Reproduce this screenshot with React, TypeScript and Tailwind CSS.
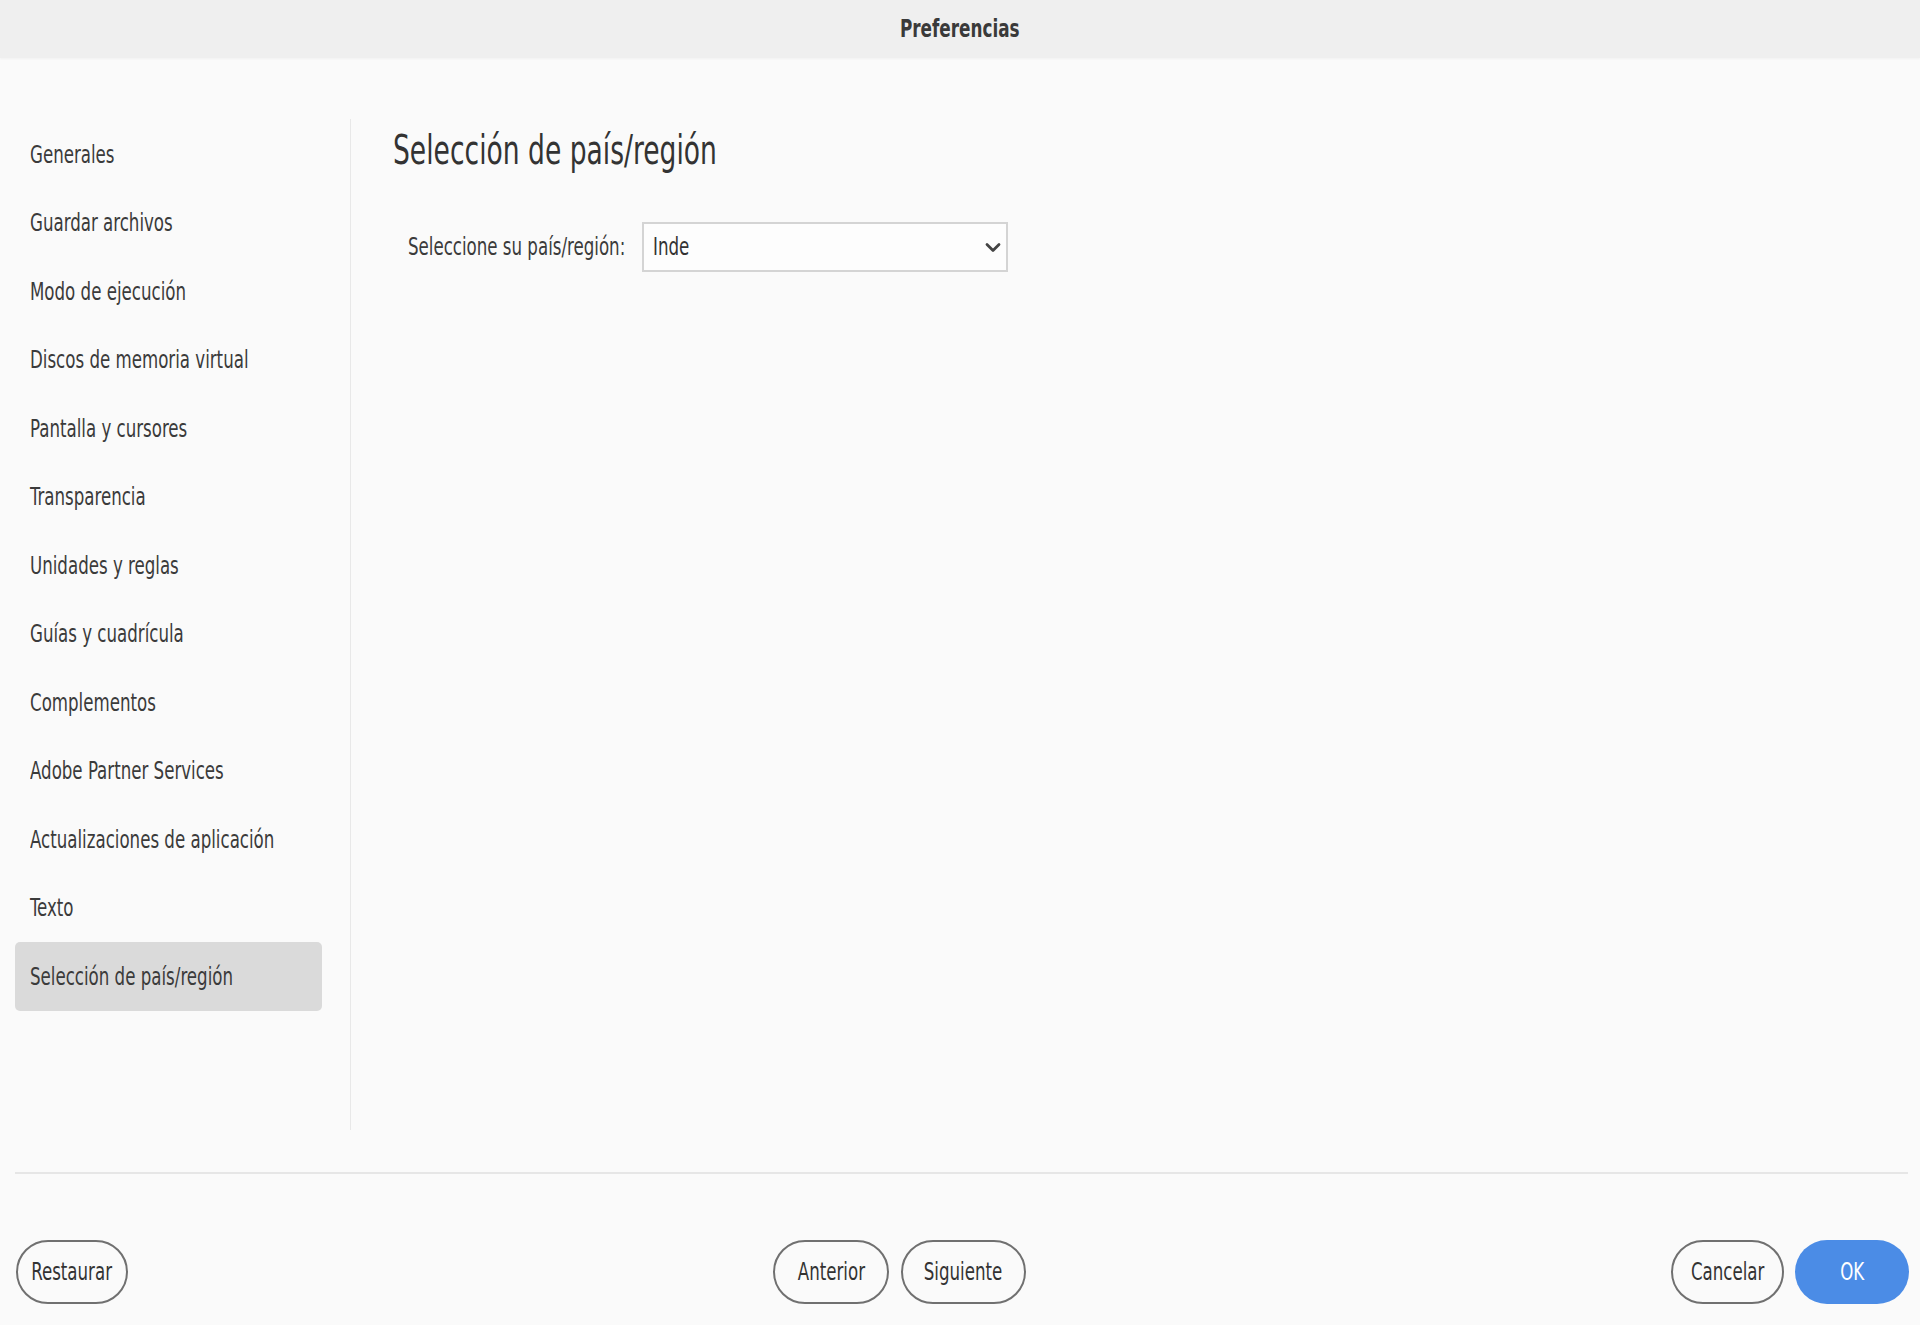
import { useState } from 'react';

const SECTIONS = [
  'Generales',
  'Guardar archivos',
  'Modo de ejecución',
  'Discos de memoria virtual',
  'Pantalla y cursores',
  'Transparencia',
  'Unidades y reglas',
  'Guías y cuadrícula',
  'Complementos',
  'Adobe Partner Services',
  'Actualizaciones de aplicación',
  'Texto',
  'Selección de país/región',
];

// the dialog font is very narrow; DejaVu Sans Condensed squeezed a bit more gets close
const font = "font-['DejaVu_Sans_Condensed','Liberation_Sans',sans-serif]";
const narrowLeft = 'inline-block whitespace-nowrap origin-left scale-x-[0.74]';
const narrowCenter = 'inline-block whitespace-nowrap origin-center scale-x-[0.74]';

function Chevron() {
  return (
    <svg width="16" height="11" viewBox="0 0 16 11" fill="none">
      <polyline points="2,2.5 8,8.5 14,2.5" stroke="#444" strokeWidth="2.8" strokeLinecap="round" strokeLinejoin="round" />
    </svg>
  );
}

export default function App() {
  const [active, setActive] = useState('Selección de país/región');

  const pill = 'h-[64px] rounded-full border-2 border-[#707070] text-[25px] text-[#333] flex items-center justify-center';

  return (
    <div className={`w-full h-[1325px] bg-[#fafafa] flex flex-col ${font}`}>
      <div className="h-[58px] shrink-0 bg-[#efefef] flex items-center justify-center shadow-[0_1px_2px_rgba(0,0,0,0.04)]">
        <span className="inline-block origin-center scale-x-[0.78] text-[24px] font-bold text-[#3a3a3a]">Preferencias</span>
      </div>

      <div className="flex h-[1011px] mt-[61px]">
        <nav className="w-[351px] shrink-0 pl-[15px] pr-[28px] pt-px border-r border-[#e8e8e8]">
          {SECTIONS.map((s) => (
            <button
              key={s}
              type="button"
              onClick={() => setActive(s)}
              className={`w-full h-[68.5px] flex items-center pl-[15px] rounded-[5px] text-left text-[25px] text-[#3b3b3b] overflow-hidden ${
                active === s ? 'bg-[#dadada]' : ''
              }`}
            >
              <span className={narrowLeft}>{s}</span>
            </button>
          ))}
        </nav>

        <main className="flex-1 pl-[42px] pt-[11px]">
          <h1 className="text-[41px] leading-none text-[#333]">
            <span className="inline-block whitespace-nowrap origin-left scale-x-[0.72]">Selección de país/región</span>
          </h1>
          <div className="flex items-center mt-[51px] ml-[15px] gap-[15px]">
            <label className="w-[219px] shrink-0 text-[25px] text-[#3b3b3b]">
              <span className={narrowLeft}>Seleccione su país/región:</span>
            </label>
            <div className="w-[366px] h-[50px] bg-[#fdfdfd] border-2 border-[#d4d4d4] flex items-center justify-between pl-[9px] pr-[5px]">
              <span className={`${narrowLeft} text-[25px] text-[#333]`}>Inde</span>
              <Chevron />
            </div>
          </div>
        </main>
      </div>

      <div className="mt-[42px] ml-[15px] mr-[12px] h-[2px] bg-[#e6e6e6]" />

      <div className="flex items-center justify-between mt-[66px] ml-[16px] mr-[11px]">
        <button type="button" className={`${pill} w-[112px]`}>
          <span className={narrowCenter}>Restaurar</span>
        </button>
        <div className="flex gap-[12px]">
          <button type="button" className={`${pill} w-[116px]`}>
            <span className={narrowCenter}>Anterior</span>
          </button>
          <button type="button" className={`${pill} w-[125px]`}>
            <span className={narrowCenter}>Siguiente</span>
          </button>
        </div>
        <div className="flex gap-[11px]">
          <button type="button" className={`${pill} w-[113px]`}>
            <span className={narrowCenter}>Cancelar</span>
          </button>
          <button type="button" className="h-[64px] w-[114px] rounded-full bg-[#4b8ce6] text-white text-[25px] flex items-center justify-center">
            <span className={narrowCenter}>OK</span>
          </button>
        </div>
      </div>
    </div>
  );
}
